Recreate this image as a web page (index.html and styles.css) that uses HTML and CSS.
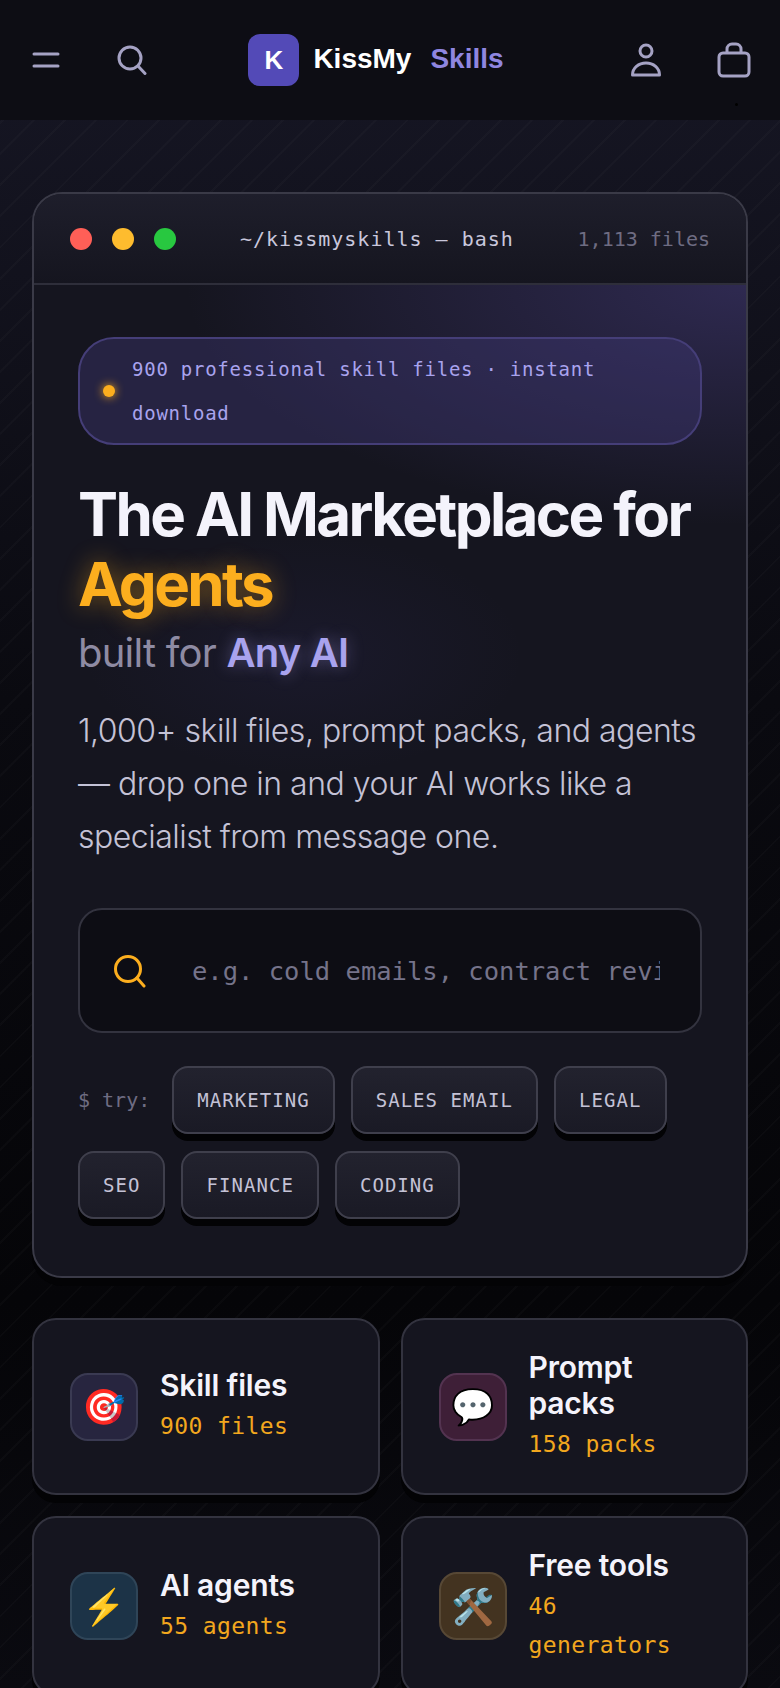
FILE: index.html
```html
<!DOCTYPE html>
<html lang="en">

<head>
  <meta charset="UTF-8">
  <meta name="viewport" content="width=device-width, initial-scale=1.0">
  <title>KissMy Skills</title>
  <link rel="stylesheet" href="styles.css">
</head>

<body>
  <header class="topbar">
    <div class="topbar-group">
      <button class="icon-btn" aria-label="Menu">
        <svg width="28" height="16" viewBox="0 0 28 16" fill="none" stroke="#a5a2c4" stroke-width="3" stroke-linecap="round">
          <path d="M2 2h24M2 14h24" />
        </svg>
      </button>
      <button class="icon-btn" aria-label="Search">
        <svg width="30" height="30" viewBox="0 0 30 30" fill="none" stroke="#a5a2c4" stroke-width="3" stroke-linecap="round">
          <circle cx="13" cy="13" r="11" />
          <path d="M21 21l7 7.500" />
        </svg>
      </button>
    </div>
    <a class="brand">
      <span class="brand-mark">K</span>
      <span class="brand-name">KissMy</span>
      <span class="brand-accent">Skills</span>
    </a>
    <div class="topbar-group topbar-right">
      <button class="icon-btn" aria-label="Account">
        <svg width="32" height="34" viewBox="0 0 32 34" fill="none" stroke="#a5a2c4" stroke-width="3" stroke-linejoin="round">
          <circle cx="16" cy="8" r="6" />
          <path d="M2.500 32c0-7 6-12 13.500-12s13.500 5 13.500 12z" />
        </svg>
      </button>
      <button class="icon-btn" aria-label="Cart">
        <svg width="34" height="36" viewBox="0 0 34 36" fill="none" stroke="#a5a2c4" stroke-width="3" stroke-linejoin="round">
          <rect x="2" y="11" width="30" height="23" rx="4" />
          <path d="M10 11V7a5 5 0 0 1 5-5h4a5 5 0 0 1 5 5v4" />
        </svg>
      </button>
      <span class="cart-dot"></span>
    </div>
  </header>

  <main class="page">
    <section class="terminal">
      <div class="terminal-bar">
        <div class="lights">
          <span class="light red"></span>
          <span class="light amber"></span>
          <span class="light green"></span>
        </div>
        <span class="terminal-path">~/kissmyskills — bash</span>
        <span class="terminal-count">1,113 files</span>
      </div>

      <div class="terminal-body">
        <div class="pill">
          <span class="pill-dot"></span>
          <span class="pill-text">900 professional skill files · instant download</span>
        </div>

        <h1>The AI Marketplace for <span class="glow-amber">Agents</span></h1>
        <h2>built for <span class="glow-violet">Any AI</span></h2>
        <p class="lede">1,000+ skill files, prompt packs, and agents — drop one in and your AI works like a specialist from message one.</p>

        <form class="search">
          <svg width="34" height="34" viewBox="0 0 34 34" fill="none" stroke="#fcae1e" stroke-width="3" stroke-linecap="round">
            <circle cx="15" cy="15" r="12.500" />
            <path d="M24 24l7 8" />
          </svg>
          <input type="text" placeholder="e.g. cold emails, contract review">
        </form>

        <div class="tries">
          <span class="try-label">$ try:</span>
          <button class="chip">Marketing</button>
          <button class="chip">Sales email</button>
          <button class="chip">Legal</button>
          <button class="chip">SEO</button>
          <button class="chip">Finance</button>
          <button class="chip">Coding</button>
        </div>
      </div>
    </section>

    <section class="cards">
      <a class="card">
        <span class="card-icon violet">🎯</span>
        <div>
          <h3>Skill files</h3>
          <p>900 files</p>
        </div>
      </a>
      <a class="card">
        <span class="card-icon plum">💬</span>
        <div>
          <h3>Prompt packs</h3>
          <p>158 packs</p>
        </div>
      </a>
      <a class="card">
        <span class="card-icon teal">⚡</span>
        <div>
          <h3>AI agents</h3>
          <p>55 agents</p>
        </div>
      </a>
      <a class="card">
        <span class="card-icon brown">🛠️</span>
        <div>
          <h3>Free tools</h3>
          <p>46 generators</p>
        </div>
      </a>
    </section>
  </main>
</body>

</html>
```

FILE: styles.css
```css
* {
  box-sizing: border-box;
}

html,
body {
  height: 1688px;
  overflow: hidden;
}

body {
  margin: 0;
  color: #f4f3fb;
  font-family: "Inter", sans-serif;
  background:
    repeating-linear-gradient(135deg, transparent 0 20px, rgba(255, 255, 255, 0.018) 20px 22px),
    linear-gradient(to bottom, #151522 110px, #0a0a10 700px, #050508 1300px, #0a0a10 1688px);
}

button {
  border: none;
  background: none;
  padding: 0;
  cursor: pointer;
}

.topbar {
  height: 120px;
  background: #0d0d14;
  display: flex;
  align-items: center;
  justify-content: space-between;
  padding: 0 18px;
}

.topbar-group {
  position: relative;
  display: flex;
  align-items: center;
  gap: 30px;
}

.topbar-right {
  gap: 32px;
}

.icon-btn {
  width: 56px;
  height: 56px;
  display: flex;
  align-items: center;
  justify-content: center;
}

.cart-dot {
  position: absolute;
  right: 24px;
  bottom: -18px;
  width: 3px;
  height: 3px;
  border-radius: 50%;
  background: #000;
}

.brand {
  display: flex;
  align-items: center;
  margin-right: 26px;
  font-family: "Liberation Sans", sans-serif;
  font-weight: 700;
  font-size: 28px;
}

.brand-mark {
  width: 51px;
  height: 52px;
  border-radius: 12px;
  background: #534ab7;
  color: #fff;
  display: flex;
  align-items: center;
  justify-content: center;
  font-size: 26px;
  margin-right: 14px;
}

.brand-name {
  color: #fff;
  margin-right: 19px;
  margin-top: -2px;
}

.brand-accent {
  color: #8f86e0;
  margin-top: -2px;
}

.page {
  padding: 72px 32px 0;
}

.terminal {
  background: #15151f;
  border: 2px solid #3a3a47;
  border-radius: 30px;
  box-shadow: 0 8px 0 #030305;
  overflow: hidden;
}

.terminal-bar {
  height: 91px;
  display: flex;
  align-items: center;
  padding: 0 36px;
  border-bottom: 2px solid #2e2e3a;
  background: linear-gradient(to bottom, #1e1e2b, #15151f);
  font-family: "DejaVu Sans Mono", monospace;
  font-size: 20px;
}

.lights {
  display: flex;
  gap: 20px;
}

.light {
  width: 22px;
  height: 22px;
  border-radius: 50%;
}

.red {
  background: #ff5f57;
}

.amber {
  background: #febc2e;
}

.green {
  background: #28c840;
}

.terminal-path {
  margin-left: 64px;
  color: #c9c7dc;
  letter-spacing: 1px;
}

.terminal-count {
  margin-left: auto;
  color: #6e6c82;
}

.terminal-body {
  padding: 52px 44px 57px;
  background:
    radial-gradient(ellipse 560px 240px at 100% 0, rgba(72, 62, 130, 0.5), transparent),
    radial-gradient(ellipse 220px 120px at 270px 370px, rgba(72, 62, 150, 0.1), transparent);
}

.pill {
  display: flex;
  align-items: center;
  gap: 17px;
  padding: 8px 23px;
  border: 2px solid #453e78;
  border-radius: 36px;
  background: rgba(65, 58, 120, 0.4);
}

.pill-dot {
  flex: none;
  width: 12px;
  height: 12px;
  border-radius: 50%;
  background: #fcae1e;
  box-shadow: 0 0 10px #fcae1e;
}

.pill-text {
  font-family: "DejaVu Sans Mono", monospace;
  font-size: 19px;
  line-height: 44px;
  letter-spacing: 0.750px;
  color: #a9a3ee;
}

h1 {
  margin: 34px 0 0;
  font-size: 60px;
  line-height: 70px;
  font-weight: 700;
  letter-spacing: -2.600px;
  color: #f4f3fb;
}

.glow-amber {
  color: #fcae1e;
  text-shadow: 0 0 24px rgba(252, 174, 30, 0.45);
}

h2 {
  margin: 6px 0 0;
  font-size: 40px;
  line-height: 56px;
  font-weight: 400;
  letter-spacing: -0.800px;
  color: #8e8ba3;
}

.glow-violet {
  font-weight: 600;
  color: #a9a3ee;
  text-shadow: 0 0 16px rgba(169, 163, 238, 0.4);
}

.lede {
  margin: 23px 0 0;
  font-size: 32px;
  line-height: 53px;
  font-weight: 300;
  letter-spacing: -0.500px;
  color: #c4c2d6;
}

.search {
  margin-top: 45px;
  height: 125px;
  display: flex;
  align-items: center;
  gap: 45px;
  padding: 0 40px 0 33px;
  background: #0d0d14;
  border: 2px solid #33333f;
  border-radius: 24px;
}

.search svg {
  flex: none;
}

.search input {
  flex: 1;
  min-width: 0;
  border: none;
  outline: none;
  background: none;
  padding: 0;
  font-family: "DejaVu Sans Mono", monospace;
  font-size: 25.500px;
}

.search input::placeholder {
  color: #75738a;
  opacity: 1;
}

.tries {
  margin-top: 33px;
  display: flex;
  flex-wrap: wrap;
  align-items: center;
  gap: 17px 16px;
}

.try-label {
  margin-right: 6px;
  font-family: "DejaVu Sans Mono", monospace;
  font-size: 20px;
  color: #6e6c82;
}

.chip {
  height: 68px;
  padding: 0 23px;
  border: 2px solid #3f3f4c;
  border-radius: 16px;
  background: linear-gradient(to bottom, #22222e, #1a1a25);
  box-shadow: 0 7px 0 #030305;
  font-family: "DejaVu Sans Mono", monospace;
  font-size: 19px;
  letter-spacing: 1.050px;
  text-transform: uppercase;
  color: #c4c2d6;
}

.cards {
  margin-top: 40px;
  display: grid;
  grid-template-columns: 1fr 1fr;
  gap: 21px 21px;
}

.card {
  display: flex;
  align-items: center;
  gap: 22px;
  padding: 29px 36px;
  background: #15151f;
  border: 2px solid #33333f;
  border-radius: 24px;
  box-shadow: 0 8px 0 #030305;
}

.card-icon {
  flex: none;
  width: 68px;
  height: 68px;
  display: flex;
  align-items: center;
  justify-content: center;
  border-radius: 18px;
  border: 2px solid #3a3a52;
  font-size: 35px;
}

.violet {
  background: #27253f;
}

.plum {
  background: #3e1f37;
  border-color: #533350;
}

.teal {
  background: #1c3347;
  border-color: #2f4558;
}

.brown {
  background: #433320;
  border-color: #574835;
}

h3 {
  margin: 0;
  font-size: 30px;
  line-height: 36px;
  font-weight: 600;
  letter-spacing: -0.200px;
  color: #f4f3fb;
}

.card p {
  margin: 4px 0 0;
  font-family: "DejaVu Sans Mono", monospace;
  font-size: 23px;
  line-height: 39px;
  letter-spacing: 0.400px;
  color: #f2a71e;
}
```
